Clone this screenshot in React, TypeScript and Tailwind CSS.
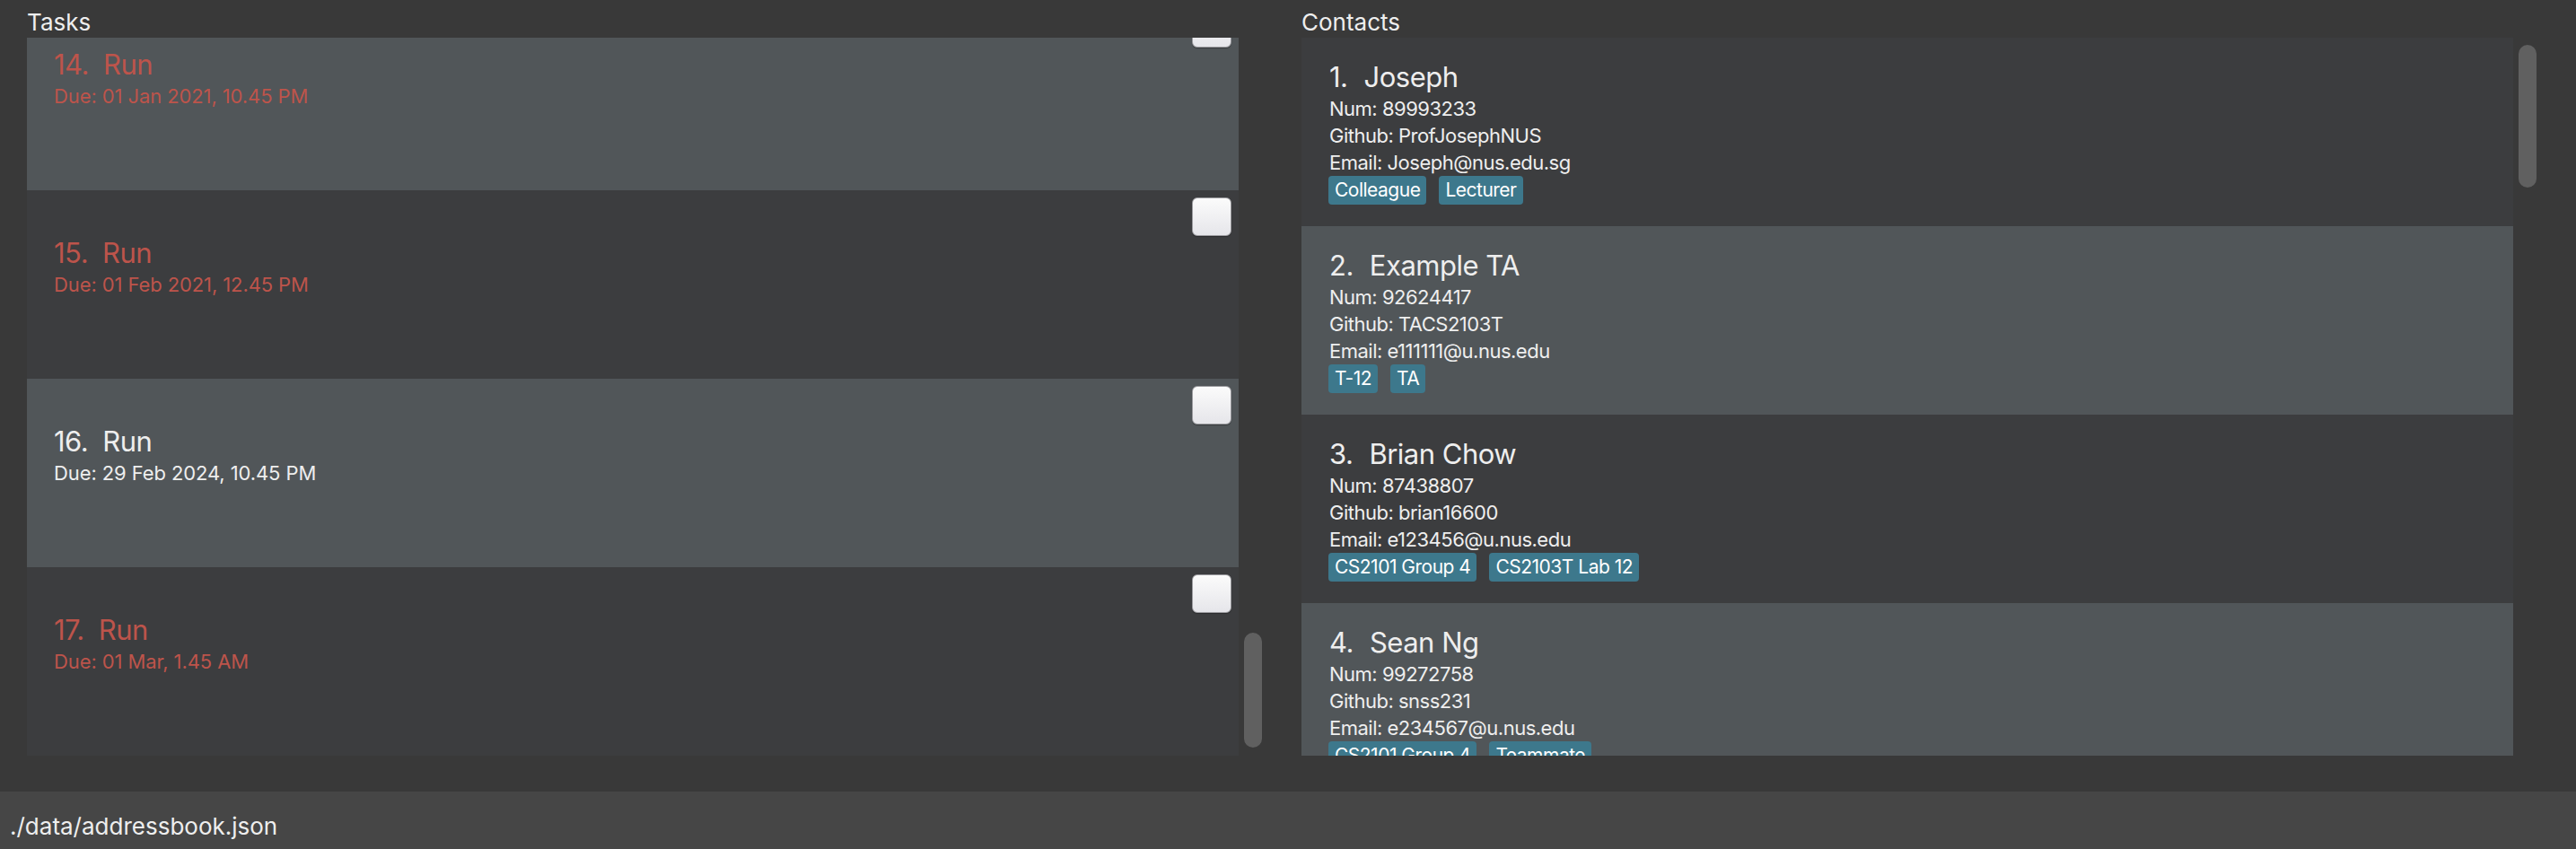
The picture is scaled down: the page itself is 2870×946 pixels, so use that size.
const tasks = [
  { id: 14, name: "Run", due: "Due: 01 Jan 2021, 10.45 PM", overdue: true },
  { id: 15, name: "Run", due: "Due: 01 Feb 2021, 12.45 PM", overdue: true },
  { id: 16, name: "Run", due: "Due: 29 Feb 2024, 10.45 PM", overdue: false },
  { id: 17, name: "Run", due: "Due: 01 Mar, 1.45 AM", overdue: true },
];

const contacts = [
  {
    id: 1,
    name: "Joseph",
    num: "89993233",
    github: "ProfJosephNUS",
    email: "Joseph@nus.edu.sg",
    tags: ["Colleague", "Lecturer"],
  },
  {
    id: 2,
    name: "Example TA",
    num: "92624417",
    github: "TACS2103T",
    email: "e111111@u.nus.edu",
    tags: ["T-12", "TA"],
  },
  {
    id: 3,
    name: "Brian Chow",
    num: "87438807",
    github: "brian16600",
    email: "e123456@u.nus.edu",
    tags: ["CS2101 Group 4", "CS2103T Lab 12"],
  },
  {
    id: 4,
    name: "Sean Ng",
    num: "99272758",
    github: "snss231",
    email: "e234567@u.nus.edu",
    tags: ["CS2101 Group 4", "Teammate"],
  },
];

function Checkbox() {
  return (
    <div className="mt-[8px] mr-[8px] h-[43px] w-[44px] shrink-0 rounded-[6px] border border-[#9a9a9e] bg-gradient-to-b from-[#fbfbfb] to-[#e6e6ea] shadow-[0_1px_1px_rgba(0,0,0,0.3)]" />
  );
}

function TaskCard({ task, index }: { task: (typeof tasks)[number]; index: number }) {
  const color = task.overdue ? "text-[#bd544b]" : "text-[#eeeeee]";
  return (
    <div
      className={`flex h-[210px] shrink-0 justify-between ${
        index % 2 === 0 ? "bg-[#515659]" : "bg-[#3c3d3f]"
      }`}
    >
      <div className={`pl-[30px] pt-[50px] ${color}`}>
        <div className="flex text-[31px] leading-[40px] tracking-[-0.5px]">
          <span>{task.id}.</span>
          <span className="ml-[16px]">{task.name}</span>
        </div>
        <div className="text-[22px] leading-[30px] tracking-[-0.1px]">{task.due}</div>
      </div>
      <Checkbox />
    </div>
  );
}

function ContactCard({ c, index }: { c: (typeof contacts)[number]; index: number }) {
  return (
    <div
      className={`h-[210px] shrink-0 pl-[31px] pt-[24px] tracking-[-0.5px] text-[#eeeeee] ${
        index % 2 === 0 ? "bg-[#3c3d3f]" : "bg-[#515659]"
      }`}
    >
      <div className="flex text-[31px] leading-[40px]">
        <span>{c.id}.</span>
        <span className="ml-[18px]">{c.name}</span>
      </div>
      <div className="text-[22px] leading-[30px]">Num: {c.num}</div>
      <div className="text-[22px] leading-[30px]">Github: {c.github}</div>
      <div className="text-[22px] leading-[30px]">Email: {c.email}</div>
      <div className="-ml-px flex gap-[14px]">
        {c.tags.map((t) => (
          <span
            key={t}
            className="h-[32px] rounded-[4px] bg-[#3d788c] px-[7px] text-[21px] leading-[32px] text-white"
          >
            {t}
          </span>
        ))}
      </div>
    </div>
  );
}

function Scrollbar({ top, height }: { top: number; height: number }) {
  return (
    <div className="w-[32px] shrink-0 pl-[6px]">
      <div
        className="w-[20px] rounded-full bg-[#606060]"
        style={{ marginTop: top, height }}
      />
    </div>
  );
}

export default function App() {
  return (
    <div
      className="flex h-[946px] w-[2870px] flex-col overflow-hidden bg-[#393939] text-[#eeeeee]"
      style={{ fontFamily: "Inter, 'Noto Sans', sans-serif" }}
    >
      <div className="flex h-[882px] gap-[38px] pl-[30px]">
        <section className="flex flex-col">
          <h2 className="h-[42px] pt-[12px] text-[26px] leading-[26px]">Tasks</h2>
          <div className="flex h-[800px]">
            <div className="flex w-[1350px] flex-col overflow-hidden">
              <div className="-mt-[40px] flex flex-col">
                {tasks.map((t, i) => (
                  <TaskCard key={t.id} task={t} index={i} />
                ))}
              </div>
            </div>
            <Scrollbar top={663} height={128} />
          </div>
        </section>

        <section className="flex flex-col">
          <h2 className="h-[42px] pt-[12px] text-[26px] leading-[26px]">Contacts</h2>
          <div className="flex h-[800px]">
            <div className="flex w-[1350px] flex-col overflow-hidden">
              {contacts.map((c, i) => (
                <ContactCard key={c.id} c={c} index={i} />
              ))}
            </div>
            <Scrollbar top={8} height={159} />
          </div>
        </section>
      </div>

      <footer className="h-[64px] bg-[#464646] pl-[11px] pt-[24px] text-[26px] leading-[30px]">
        ./data/addressbook.json
      </footer>
    </div>
  );
}
